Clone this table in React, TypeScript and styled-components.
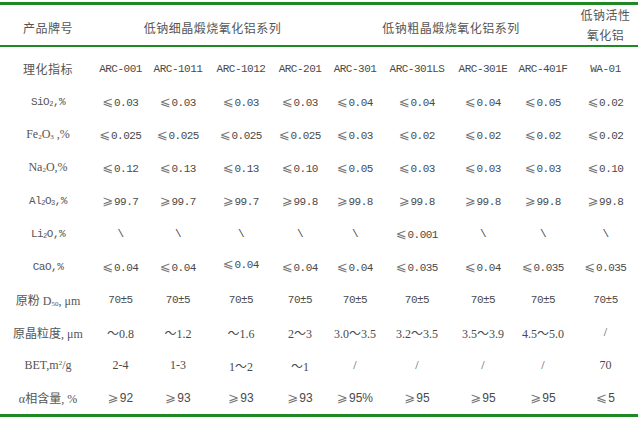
import React from "react";
import styled, { createGlobalStyle } from "styled-components";

const Global = createGlobalStyle`
  html, body { margin: 0; padding: 0; background: #fff; }
  body { font-family: "Noto Sans CJK SC", sans-serif; color: #4a4a4a; }
`;

const GREEN = "#1f8a24";

const Table = styled.table`
  width: 638px;
  border-collapse: collapse;
  table-layout: fixed;
  margin-top: 2px;
  border-top: 3px solid ${GREEN};
  border-bottom: 3px solid ${GREEN};
`;

const HeadRow = styled.tr`
  height: 38px;
  border-bottom: 2px solid ${GREEN};
`;

const HeadCell = styled.th<{ $lines?: number }>`
  padding: ${(p) => (p.$lines === 2 ? "0" : "6px 0 0")};
  font-weight: normal;
  font-size: 12px;
  line-height: 20px;
  text-align: center;
  vertical-align: middle;
  color: #555;
  font-family: "Noto Sans CJK SC", sans-serif;
  letter-spacing: 0.5px;
`;

const Spacer = styled.tr`
  height: 6px;
`;

const BodyRow = styled.tr`
  height: 33px;
`;

type Font = "mono" | "serif" | "sans" | "cjk";

const fontStack: Record<Font, string> = {
  mono: `"Liberation Mono", "Noto Sans CJK SC", monospace`,
  serif: `"Liberation Serif", "Noto Sans CJK SC", serif`,
  sans: `"Liberation Sans", "Noto Sans CJK SC", sans-serif`,
  cjk: `"Noto Sans CJK SC", sans-serif`,
};

const fontSize: Record<Font, string> = {
  mono: "11px",
  serif: "12px",
  sans: "12px",
  cjk: "12px",
};

const spacing: Record<Font, string> = {
  mono: "-0.5px",
  serif: "0",
  sans: "0",
  cjk: "0.5px",
};

const LabelCell = styled.td<{ $font: Font }>`
  padding: 0;
  text-align: center;
  vertical-align: middle;
  font-family: ${(p) => fontStack[p.$font]};
  font-size: ${(p) => fontSize[p.$font]};
  letter-spacing: ${(p) => spacing[p.$font]};
  color: #555;
  white-space: nowrap;
`;

const ValueCell = styled.td<{ $font: Font; $raise?: boolean }>`
  padding: 0 0 ${(p) => (p.$raise ? "6px" : "0")};
  text-align: center;
  vertical-align: middle;
  font-family: ${(p) => fontStack[p.$font]};
  font-size: ${(p) => fontSize[p.$font]};
  letter-spacing: ${(p) => spacing[p.$font]};
  color: #4a4a4a;
  white-space: nowrap;
`;

const Sym = styled.span`
  font-family: "DejaVu Sans", sans-serif;
  font-size: 13px;
  color: #777;
  margin-right: 1px;
`;

const Sub = styled.sub`
  font-size: 7px;
  vertical-align: -1px;
`;

const Sup = styled.sup`
  font-size: 7px;
  vertical-align: 4px;
`;

const Cjk = styled.span`
  font-family: "Noto Sans CJK SC", sans-serif;
  font-size: 12px;
`;

const widths = [96, 49, 66, 60, 58, 52, 72, 60, 60, 65];

type Row = {
  label: React.ReactNode;
  labelFont: Font;
  font: Font;
  values: string[];
  raise?: number[];
};

const rows: Row[] = [
  {
    label: "理化指标",
    labelFont: "cjk",
    font: "mono",
    values: ["ARC-001", "ARC-1011", "ARC-1012", "ARC-201", "ARC-301", "ARC-301LS", "ARC-301E", "ARC-401F", "WA-01"],
  },
  {
    label: <>SiO<Sub>2</Sub>,%</>,
    labelFont: "mono",
    font: "mono",
    values: ["≤0.03", "≤0.03", "≤0.03", "≤0.03", "≤0.04", "≤0.04", "≤0.04", "≤0.05", "≤0.02"],
  },
  {
    label: <>Fe<Sub>2</Sub>O<Sub>3</Sub> ,%</>,
    labelFont: "serif",
    font: "mono",
    values: ["≤0.025", "≤0.025", "≤0.025", "≤0.025", "≤0.03", "≤0.02", "≤0.02", "≤0.02", "≤0.02"],
  },
  {
    label: <>Na<Sub>2</Sub>O,%</>,
    labelFont: "serif",
    font: "mono",
    values: ["≤0.12", "≤0.13", "≤0.13", "≤0.10", "≤0.05", "≤0.03", "≤0.03", "≤0.03", "≤0.10"],
  },
  {
    label: <>Al<Sub>2</Sub>O<Sub>3</Sub>,%</>,
    labelFont: "mono",
    font: "mono",
    values: ["≥99.7", "≥99.7", "≥99.7", "≥99.8", "≥99.8", "≥99.8", "≥99.8", "≥99.8", "≥99.8"],
  },
  {
    label: <>Li<Sub>2</Sub>O,%</>,
    labelFont: "mono",
    font: "mono",
    values: ["\\", "\\", "\\", "\\", "\\", "≤0.001", "\\", "\\", "\\"],
  },
  {
    label: "CaO,%",
    labelFont: "mono",
    font: "mono",
    values: ["≤0.04", "≤0.04", "≤0.04", "≤0.04", "≤0.04", "≤0.035", "≤0.04", "≤0.035", "≤0.035"],
    raise: [2],
  },
  {
    label: <><Cjk>原粉</Cjk> D<Sub>50</Sub>, μm</>,
    labelFont: "serif",
    font: "mono",
    values: ["70±5", "70±5", "70±5", "70±5", "70±5", "70±5", "70±5", "70±5", "70±5"],
  },
  {
    label: <><Cjk>原晶粒度</Cjk>, μm</>,
    labelFont: "serif",
    font: "serif",
    values: ["～0.8", "～1.2", "～1.6", "2～3", "3.0～3.5", "3.2～3.5", "3.5～3.9", "4.5～5.0", "/"],
  },
  {
    label: <>BET,m<Sup>2</Sup>/g</>,
    labelFont: "serif",
    font: "serif",
    values: ["2-4", "1-3", "1～2", "～1", "/", "/", "/", "/", "70"],
  },
  {
    label: <>α<Cjk>相含量</Cjk>, %</>,
    labelFont: "serif",
    font: "sans",
    values: ["≥92", "≥93", "≥93", "≥93", "≥95%", "≥95", "≥95", "≥95", "≤5"],
  },
];

const slanted: Record<string, string> = { "≤": "⩽", "≥": "⩾" };

function renderValue(v: string) {
  const first = v.charAt(0);
  if (first in slanted) {
    return (
      <>
        <Sym>{slanted[first]}</Sym>
        {v.slice(1)}
      </>
    );
  }
  return v;
}

export default function App() {
  return (
    <>
      <Global />
      <Table>
        <colgroup>
          {widths.map((w, i) => (
            <col key={i} style={{ width: w }} />
          ))}
        </colgroup>
        <thead>
          <HeadRow>
            <HeadCell>产品牌号</HeadCell>
            <HeadCell colSpan={4}>低钠细晶煅烧氧化铝系列</HeadCell>
            <HeadCell colSpan={4}>低钠粗晶煅烧氧化铝系列</HeadCell>
            <HeadCell $lines={2}>
              低钠活性
              <br />
              氧化铝
            </HeadCell>
          </HeadRow>
        </thead>
        <tbody>
          <Spacer />
          {rows.map((r, ri) => (
            <BodyRow key={ri}>
              <LabelCell $font={r.labelFont}>{r.label}</LabelCell>
              {r.values.map((v, vi) => (
                <ValueCell key={vi} $font={r.font} $raise={r.raise?.includes(vi)}>
                  {renderValue(v)}
                </ValueCell>
              ))}
            </BodyRow>
          ))}
        </tbody>
      </Table>
    </>
  );
}
